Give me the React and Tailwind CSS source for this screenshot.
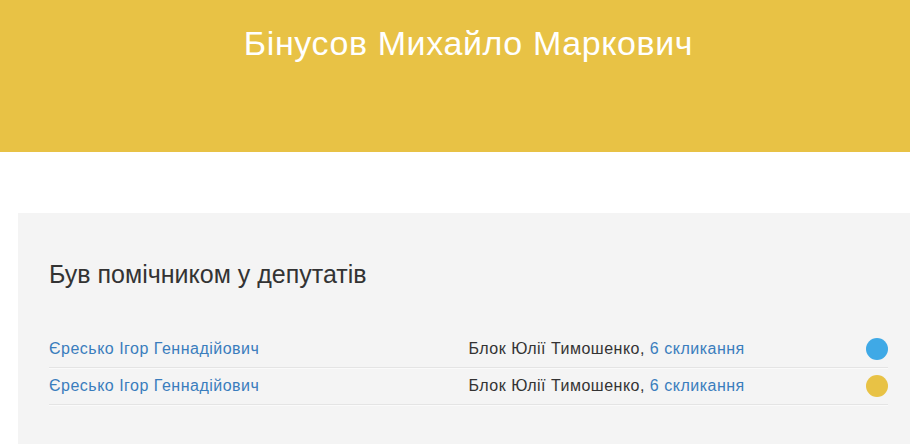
export default function App() {
  const rows = [
    { name: "Єресько Ігор Геннадійович", color: "bg-[#3fa9e6]" },
    { name: "Єресько Ігор Геннадійович", color: "bg-[#e8c245]" },
  ];
  return (
    <div className="w-[910px] h-[444px] overflow-hidden bg-white" style={{ fontFamily: '"Liberation Sans", Arial, sans-serif' }}>
      <div className="w-[937px]">
        <header className="h-[152px] bg-[#e8c245] flex justify-center pt-[23px]">
          <h1 className="text-[34px] leading-[40px] tracking-[0.6px] text-white font-normal">Бінусов Михайло Маркович</h1>
        </header>
        <div className="px-[18px] pt-[61px]">
          <section className="bg-[#f4f4f4] px-[31px] pt-[46px] pb-[40px]">
            <h2 className="text-[25px] leading-[30px] text-[#333] font-normal">Був помічником у депутатів</h2>
            <div className="mt-[42px]">
              {rows.map((r, i) => (
                <div key={i} className="relative h-[37px] flex items-center border-b border-[#e4e4e4] text-[16px] tracking-[0.5px] shadow-[0_1px_0_#fafafa]">
                  <div className="w-1/2">
                    <a className="text-[#3a7dbd]">{r.name}</a>
                  </div>
                  <div className="w-1/2 text-[#333]">
                    Блок Юлії Тимошенко, <a className="text-[#3a7dbd]">6 скликання</a>
                  </div>
                  <span className={`absolute right-0 top-1/2 -translate-y-1/2 w-[22px] h-[22px] rounded-full ${r.color}`} />
                </div>
              ))}
            </div>
          </section>
        </div>
      </div>
    </div>
  );
}
